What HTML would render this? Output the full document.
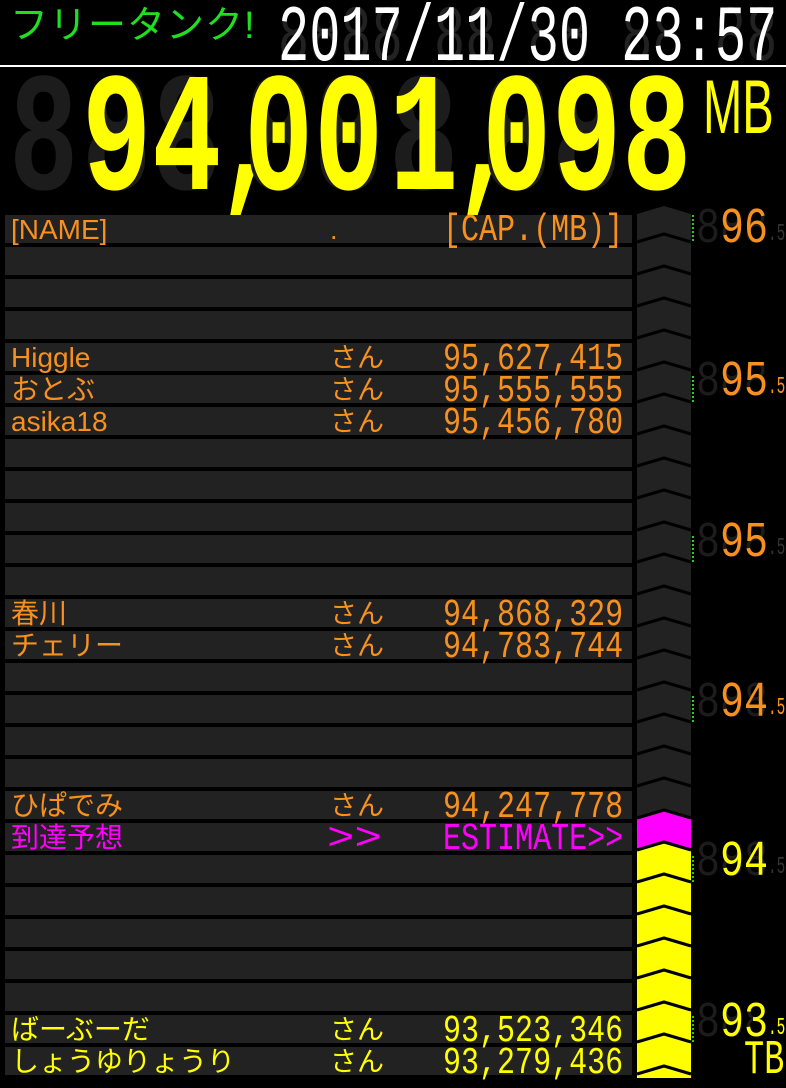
<!DOCTYPE html>
<html><head><meta charset="utf-8">
<style>
*{margin:0;padding:0;box-sizing:border-box}
body{width:786px;height:1085px;background:#000;position:relative;overflow:hidden;font-family:"Liberation Sans","Noto Sans CJK JP",sans-serif}
.a{position:absolute;white-space:pre}
.m{font-family:"Liberation Mono",monospace;line-height:1;transform-origin:0 0}
.bar{position:absolute;left:5px;width:627px;height:28px;background:#222}
.nm{position:absolute;left:11px;font-size:28px;line-height:28px;white-space:pre}
.sn{position:absolute;left:330px;font-size:27px;line-height:28px}
.o{color:#f7901e}.y{color:#ffff00}.p{color:#ff00ff}
.bd{position:absolute;top:60px;font-family:"Liberation Mono",monospace;font-weight:bold;font-size:170px;line-height:1;transform:scaleX(0.68);transform-origin:0 0}
.k{color:#1c1c1c}.Y{color:#ff0}
</style></head><body>

<div class="a" style="left:10px;top:4px;font-size:38px;color:#1ee01e;line-height:44px;letter-spacing:1px">フリータンク!</div>

<!-- date -->
<div class="a m" style="left:278px;top:0px;font-size:80px;color:#222;transform:scaleX(0.65)">8888/88/88 88:88</div>
<div class="a m" style="left:278px;top:0px;font-size:80px;color:#fff;transform:scaleX(0.65)">2017/11/30 23:57</div>
<div class="a" style="left:0;top:65px;width:786px;height:2px;background:#fff"></div>

<!-- big number -->
<div class="bd k" style="left:9px">8</div>
<div class="bd k" style="left:82px">8</div><div class="bd Y" style="left:82px">9</div>
<div class="bd k" style="left:152px">8</div><div class="bd Y" style="left:152px">4</div>
<div class="bd Y" style="left:215px">,</div>
<div class="bd k" style="left:244px">8</div><div class="bd Y" style="left:244px">0</div>
<div class="bd k" style="left:314px">8</div><div class="bd Y" style="left:314px">0</div>
<div class="bd k" style="left:389px">8</div><div class="bd Y" style="left:389px">1</div>
<div class="bd Y" style="left:452px">,</div>
<div class="bd k" style="left:482px">8</div><div class="bd Y" style="left:482px">0</div>
<div class="bd k" style="left:552px">8</div><div class="bd Y" style="left:552px">9</div>
<div class="bd k" style="left:622px">8</div><div class="bd Y" style="left:622px">8</div>
<div class="a" style="left:703px;top:70px;font-size:76px;color:#ff0;line-height:76px;transform:scaleX(0.62);transform-origin:0 0">MB</div>

<!-- rows -->
<div class="bar" style="top:215px"></div><div class="bar" style="top:247px"></div><div class="bar" style="top:279px"></div><div class="bar" style="top:311px"></div><div class="bar" style="top:343px"></div><div class="bar" style="top:375px"></div><div class="bar" style="top:407px"></div><div class="bar" style="top:439px"></div><div class="bar" style="top:471px"></div><div class="bar" style="top:503px"></div><div class="bar" style="top:535px"></div><div class="bar" style="top:567px"></div><div class="bar" style="top:599px"></div><div class="bar" style="top:631px"></div><div class="bar" style="top:663px"></div><div class="bar" style="top:695px"></div><div class="bar" style="top:727px"></div><div class="bar" style="top:759px"></div><div class="bar" style="top:791px"></div><div class="bar" style="top:823px"></div><div class="bar" style="top:855px"></div><div class="bar" style="top:887px"></div><div class="bar" style="top:919px"></div><div class="bar" style="top:951px"></div><div class="bar" style="top:983px"></div><div class="bar" style="top:1015px"></div><div class="bar" style="top:1047px"></div>

<div class="nm o" style="top:216px">[NAME]</div><div class="sn o" style="top:216px">.</div>
<div class="a m o" style="left:443px;top:212px;font-size:38px;transform:scaleX(0.79)">[CAP.(MB)]</div>

<div class="nm o" style="top:344px">Higgle</div><div class="sn o" style="top:344px">さん</div>
<div class="a m o" style="left:443px;top:341px;font-size:38px;transform:scaleX(0.79)">95,627,415</div>
<div class="nm o" style="top:376px">おとぶ</div><div class="sn o" style="top:376px">さん</div>
<div class="a m o" style="left:443px;top:373px;font-size:38px;transform:scaleX(0.79)">95,555,555</div>
<div class="nm o" style="top:408px">asika18</div><div class="sn o" style="top:408px">さん</div>
<div class="a m o" style="left:443px;top:405px;font-size:38px;transform:scaleX(0.79)">95,456,780</div>

<div class="nm o" style="top:600px">春川</div><div class="sn o" style="top:600px">さん</div>
<div class="a m o" style="left:443px;top:597px;font-size:38px;transform:scaleX(0.79)">94,868,329</div>
<div class="nm o" style="top:632px">チェリー</div><div class="sn o" style="top:632px">さん</div>
<div class="a m o" style="left:443px;top:629px;font-size:38px;transform:scaleX(0.79)">94,783,744</div>

<div class="nm o" style="top:792px">ひぱでみ</div><div class="sn o" style="top:792px">さん</div>
<div class="a m o" style="left:443px;top:789px;font-size:38px;transform:scaleX(0.79)">94,247,778</div>
<div class="nm p" style="top:824px">到達予想</div>
<div class="a m p" style="left:327px;top:821px;font-size:38px;transform:scaleX(1.2)">&gt;&gt;</div>
<div class="a m p" style="left:443px;top:821px;font-size:38px;transform:scaleX(0.79)">ESTIMATE&gt;&gt;</div>

<div class="nm y" style="top:1016px">ばーぶーだ</div><div class="sn y" style="top:1016px">さん</div>
<div class="a m y" style="left:443px;top:1013px;font-size:38px;transform:scaleX(0.79)">93,523,346</div>
<div class="nm y" style="top:1048px">しょうゆりょうり</div><div class="sn y" style="top:1048px">さん</div>
<div class="a m y" style="left:443px;top:1045px;font-size:38px;transform:scaleX(0.79)">93,279,436</div>

<!-- chevron column -->
<svg class="a" style="left:0;top:0" width="786" height="1085">
<polygon points="637,214 664,206 691,214 691,818 664,810 637,818" fill="#222"/>
<polygon points="637,818 664,810 691,818 691,850 664,842 637,850" fill="#ff00ff"/>
<polygon points="637,850 664,842 691,850 691,1078 637,1078" fill="#ff0"/>
<g fill="none" stroke="#000" stroke-width="3">
<polyline points="637,242 664,234 691,242"/><polyline points="637,274 664,266 691,274"/><polyline points="637,306 664,298 691,306"/><polyline points="637,338 664,330 691,338"/><polyline points="637,370 664,362 691,370"/><polyline points="637,402 664,394 691,402"/><polyline points="637,434 664,426 691,434"/><polyline points="637,466 664,458 691,466"/><polyline points="637,498 664,490 691,498"/><polyline points="637,530 664,522 691,530"/><polyline points="637,562 664,554 691,562"/><polyline points="637,594 664,586 691,594"/><polyline points="637,626 664,618 691,626"/><polyline points="637,658 664,650 691,658"/><polyline points="637,690 664,682 691,690"/><polyline points="637,722 664,714 691,722"/><polyline points="637,754 664,746 691,754"/><polyline points="637,786 664,778 691,786"/><polyline points="637,818 664,810 691,818"/><polyline points="637,850 664,842 691,850"/><polyline points="637,882 664,874 691,882"/><polyline points="637,914 664,906 691,914"/><polyline points="637,946 664,938 691,946"/><polyline points="637,978 664,970 691,978"/><polyline points="637,1010 664,1002 691,1010"/><polyline points="637,1042 664,1034 691,1042"/><polyline points="637,1074 664,1066 691,1074"/>
</g>
<g stroke="#2c2" stroke-width="2" stroke-dasharray="2,2">
<line x1="693" y1="215" x2="693" y2="243"/><line x1="693" y1="376" x2="693" y2="404"/><line x1="693" y1="536" x2="693" y2="564"/><line x1="693" y1="696" x2="693" y2="724"/><line x1="693" y1="856" x2="693" y2="884"/><line x1="693" y1="1016" x2="693" y2="1044"/>
</g>
</svg>

<!-- scale labels -->
<div class="a m" style="left:696px;top:205px;font-size:50px;color:#1c1c1c;transform:scaleX(0.8)">888</div>
<div class="a m o" style="left:696px;top:205px;font-size:50px;transform:scaleX(0.8)"> 96</div>
<div class="a m" style="left:768px;top:223px;font-size:24px;color:#333;transform:scaleX(0.6)">.5</div>

<div class="a m" style="left:696px;top:358px;font-size:50px;color:#1c1c1c;transform:scaleX(0.8)">888</div>
<div class="a m o" style="left:696px;top:358px;font-size:50px;transform:scaleX(0.8)"> 95</div>
<div class="a m o" style="left:768px;top:376px;font-size:24px;transform:scaleX(0.6)">.5</div>

<div class="a m" style="left:696px;top:519px;font-size:50px;color:#1c1c1c;transform:scaleX(0.8)">888</div>
<div class="a m o" style="left:696px;top:519px;font-size:50px;transform:scaleX(0.8)"> 95</div>
<div class="a m" style="left:768px;top:537px;font-size:24px;color:#333;transform:scaleX(0.6)">.5</div>

<div class="a m" style="left:696px;top:679px;font-size:50px;color:#1c1c1c;transform:scaleX(0.8)">888</div>
<div class="a m o" style="left:696px;top:679px;font-size:50px;transform:scaleX(0.8)"> 94</div>
<div class="a m o" style="left:768px;top:697px;font-size:24px;transform:scaleX(0.6)">.5</div>

<div class="a m" style="left:696px;top:838px;font-size:50px;color:#1c1c1c;transform:scaleX(0.8)">888</div>
<div class="a m y" style="left:696px;top:838px;font-size:50px;transform:scaleX(0.8)"> 94</div>
<div class="a m" style="left:768px;top:856px;font-size:24px;color:#333;transform:scaleX(0.6)">.5</div>

<div class="a m" style="left:696px;top:999px;font-size:50px;color:#1c1c1c;transform:scaleX(0.8)">888</div>
<div class="a m y" style="left:696px;top:999px;font-size:50px;transform:scaleX(0.8)"> 93</div>
<div class="a m y" style="left:768px;top:1017px;font-size:24px;transform:scaleX(0.6)">.5</div>

<div class="a m y" style="left:744px;top:1037px;font-size:48px;transform:scaleX(0.7)">TB</div>
</body></html>
